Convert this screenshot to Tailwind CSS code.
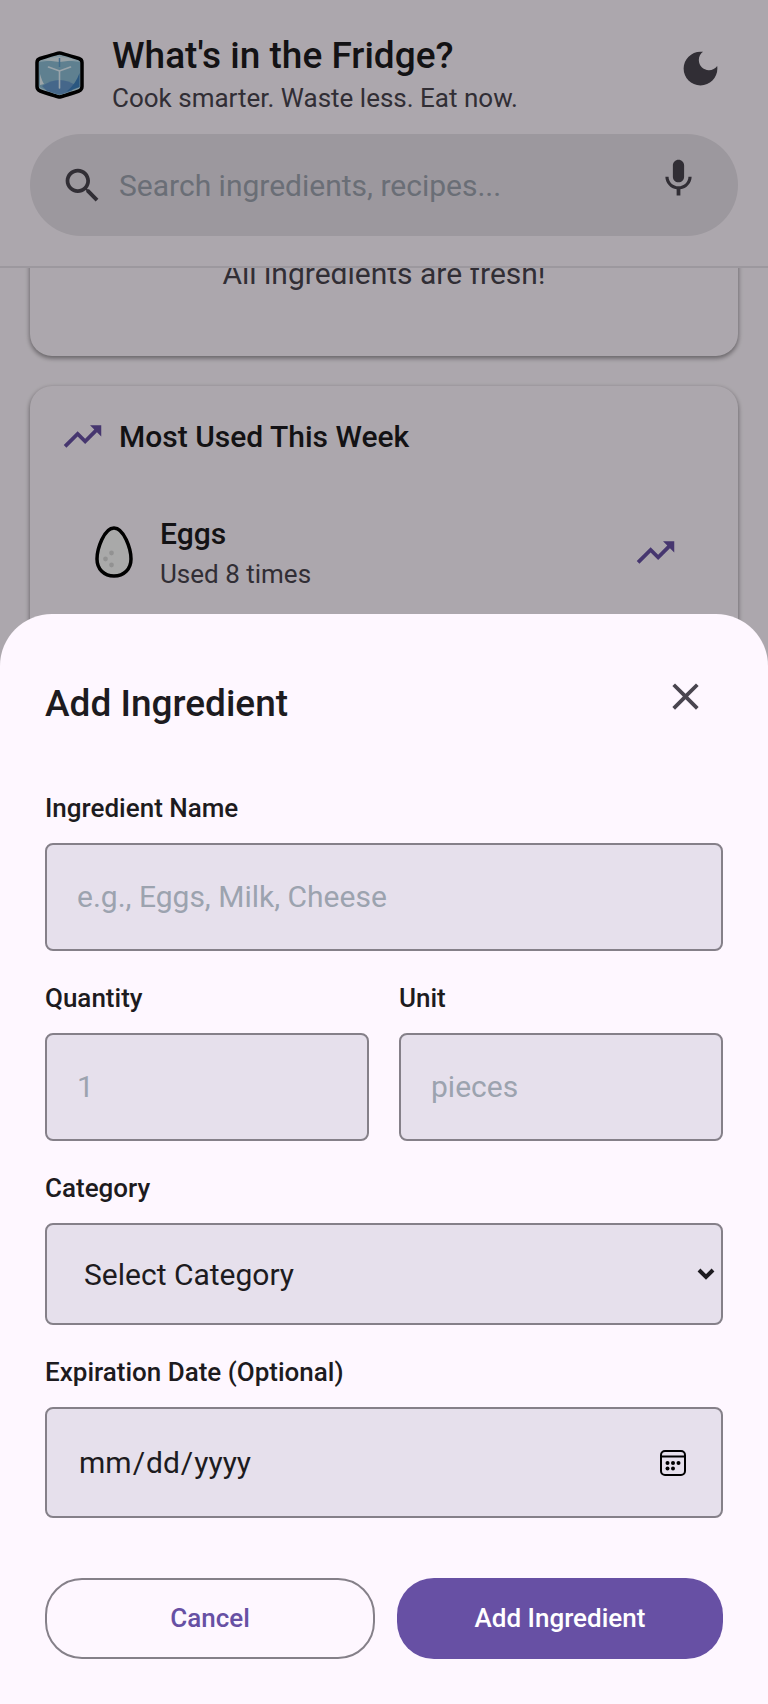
<!DOCTYPE html>
<html lang="en">
<head>
  <meta charset="UTF-8" />
  <meta name="viewport" content="width=device-width, initial-scale=1.0" />
  <title>What's in the Fridge?</title>
  <script src="https://cdn.jsdelivr.net/npm/@tailwindcss/browser@4"></script>
</head>
<body class="h-screen overflow-hidden flex flex-col bg-[#fef7ff] text-[#1d1b20] font-[Roboto,sans-serif] text-[30px] leading-[45px]">

  <!-- Header -->
  <header class="shrink-0 px-[30px] pt-[33px] pb-[30px] border-b-2 border-[#e6e0e9]">
    <div class="flex items-center justify-between h-[86px] mb-[15px]">
      <div class="flex items-center gap-[22px]">
        <svg class="size-[60px] shrink-0" viewBox="0 0 60 60" aria-hidden="true">
          <path d="M29.500 7Q31 7 49 12.500Q52 13.500 52 16.500V40.500Q52 43.500 49 45Q31 51 29.500 51Q28 51 10 45Q7 43.500 7 40.500V16.500Q7 13.500 10 12.500Q28 7 29.500 7Z" fill="#bfdfee" stroke="#000" stroke-width="3.500" stroke-linejoin="round" />
          <path d="M9 16L29.500 13.500L50 16V41Q31 49 29.500 49Q28 49 9 41Z" fill="#8cbdd4" />
          <path d="M12 40Q29.500 28 47 40L41 45Q31 48.500 29.500 48.500Q28 48.500 17 45Z" fill="#6699cc" />
          <path d="M49.500 27V41L36 46Q46 38 49.500 27Z" fill="#3f80bd" />
          <path d="M10 28Q12 35 14 38L10 39Z" fill="#e8f4fa" />
          <path d="M13 14Q29.500 8 46 14L29.500 16Z" fill="#e2f0f6" />
          <path d="M29.500 12V21" stroke="#5f9dcc" stroke-width="1.500" />
          <path d="M18.500 21L29.500 25L40.500 21M29.500 25V42" fill="none" stroke="#e4f2fb" stroke-width="1.600" stroke-linecap="round" />
        </svg>
        <div>
          <h1 class="text-[37px] leading-[45px] font-medium">What's in the Fridge?</h1>
          <p class="text-[26px] leading-[41px] text-[#49454f]">Cook smarter. Waste less. Eat now.</p>
        </div>
      </div>
      <button type="button" aria-label="Dark mode" class="px-[15px] pt-[15px] pb-[30px] text-[#49454f]">
        <svg class="size-[45px]" viewBox="0 0 24 24" fill="currentColor"><path d="M12 3c-4.970 0-9 4.030-9 9s4.030 9 9 9 9-4.030 9-9c0-.460-.040-.920-.100-1.360-.980 1.370-2.580 2.260-4.400 2.260-2.980 0-5.400-2.420-5.400-5.400 0-1.810.890-3.420 2.260-4.400-.440-.060-.900-.100-1.360-.100z" /></svg>
      </button>
    </div>

    <div class="flex items-center h-[102px] rounded-full bg-[#e6e0e9] pl-[30px] pr-[22px] text-[#49454f]">
      <svg class="size-[45px] shrink-0" viewBox="0 0 24 24" fill="currentColor" aria-hidden="true"><path d="M15.500 14h-.790l-.280-.270C15.410 12.590 16 11.110 16 9.500 16 5.910 13.090 3 9.500 3S3 5.910 3 9.500 5.910 16 9.500 16c1.610 0 3.090-.590 4.230-1.570l.270.280v.790l5 4.990L20.490 19l-4.990-5zm-6 0C7.010 14 5 11.990 5 9.500S7.010 5 9.500 5 14 7.010 14 9.500 11.990 14 9.500 14z" /></svg>
      <input type="search" aria-label="Search" placeholder="Search ingredients, recipes..." class="flex-1 min-w-0 ml-[14px] bg-transparent text-[#1d1b20] placeholder:text-[#9ca3af] outline-none" />
      <button type="button" aria-label="Voice search" class="px-[15px] pt-[15px] pb-[28px]">
        <svg class="size-[45px]" viewBox="0 0 24 24" fill="currentColor"><path d="M12 14c1.660 0 2.990-1.340 2.990-3L15 5c0-1.660-1.340-3-3-3S9 3.340 9 5v6c0 1.660 1.340 3 3 3zm5.300-3c0 3-2.540 5.100-5.300 5.100S6.700 14 6.700 11H5c0 3.410 2.720 6.230 6 6.720V21h2v-3.280c3.280-.480 6-3.300 6-6.720h-1.700z" /></svg>
      </button>
    </div>
  </header>

  <!-- Cards, scrolled under the header -->
  <main class="flex-1 min-h-0 overflow-hidden px-[30px]">
    <div class="-mt-[77px] flex flex-col gap-[30px]">
      <section class="rounded-[22px] p-[60px] bg-[#fef7ff] text-center text-[#49454f] shadow-[0_2px_4px_rgba(0,0,0,0.3),0_2px_5px_1px_rgba(0,0,0,0.15)]">
        <p>All ingredients are fresh!</p>
      </section>

      <section class="rounded-[22px] px-[30px] pt-[28px] pb-[120px] bg-[#fef7ff] shadow-[0_2px_4px_rgba(0,0,0,0.3),0_2px_5px_1px_rgba(0,0,0,0.15)]">
        <h2 class="flex items-center gap-[14px] mb-[22px] font-medium">
          <svg class="size-[45px] text-[#6750a4]" viewBox="0 0 24 24" fill="currentColor" aria-hidden="true"><path d="M16 6l2.290 2.290-4.880 4.880-4-4L2 16.590 3.410 18l6-6 4 4 6.300-6.290L22 12V6z" /></svg>
          Most Used This Week
        </h2>
        <div class="flex items-center gap-[22px] p-[30px]">
          <svg class="w-[48px] h-[60px]" viewBox="0 0 48 60" aria-hidden="true">
            <path d="M24 6C34 6 41 27 41 37C41 47 34 54 24 54S7 47 7 37C7 27 14 6 24 6Z" fill="#fafafa" stroke="#000" stroke-width="3.500" />
            <g fill="#d8d8d8"><circle cx="21.500" cy="31" r="2.400" /><circle cx="15.500" cy="37" r="2.400" /><circle cx="21.500" cy="43" r="2.400" /></g>
          </svg>
          <div class="flex-1">
            <p class="font-medium">Eggs</p>
            <p class="text-[26px] leading-[37px] text-[#49454f]">Used 8 times</p>
          </div>
          <svg class="size-[45px] text-[#6750a4]" viewBox="0 0 24 24" fill="currentColor" aria-hidden="true"><path d="M16 6l2.290 2.290-4.880 4.880-4-4L2 16.590 3.410 18l6-6 4 4 6.300-6.290L22 12V6z" /></svg>
        </div>
      </section>
    </div>
  </main>

  <!-- Scrim + bottom sheet -->
  <div class="fixed inset-0 flex flex-col justify-end bg-black/32">
    <div role="dialog" aria-labelledby="sheetTitle" class="rounded-t-[52px] bg-[#fef7ff] p-[45px]">
      <div class="flex items-center justify-between mb-[42px]">
        <h2 id="sheetTitle" class="text-[37px] leading-[52px] font-medium">Add Ingredient</h2>
        <button type="button" aria-label="Close" class="px-[15px] pt-[15px] pb-[29px] text-[#49454f]">
          <svg class="size-[45px]" viewBox="0 0 24 24" fill="currentColor"><path d="M19 6.410L17.590 5 12 10.590 6.410 5 5 6.410 10.590 12 5 17.590 6.410 19 12 13.410 17.590 19 19 17.590 13.410 12z" /></svg>
        </button>
      </div>

      <form class="flex flex-col gap-[29px]">
        <div class="flex flex-col gap-[16px]">
          <label for="name" class="text-[26px] leading-[37px] font-medium">Ingredient Name</label>
          <input id="name" type="text" placeholder="e.g., Eggs, Milk, Cheese" class="w-full h-[108px] px-[30px] pb-[2px] rounded-lg border-2 border-[#858089] bg-[#e6e0ec] placeholder:text-[#9ca3af]" />
        </div>

        <div class="grid grid-cols-2 gap-[30px]">
          <div class="flex flex-col gap-[16px]">
            <label for="quantity" class="text-[26px] leading-[37px] font-medium">Quantity</label>
            <input id="quantity" type="number" placeholder="1" class="w-full h-[108px] px-[30px] pb-[2px] rounded-lg border-2 border-[#858089] bg-[#e6e0ec] placeholder:text-[#9ca3af]" />
          </div>
          <div class="flex flex-col gap-[16px]">
            <label for="unit" class="text-[26px] leading-[37px] font-medium">Unit</label>
            <input id="unit" type="text" placeholder="pieces" class="w-full h-[108px] px-[30px] pb-[2px] rounded-lg border-2 border-[#858089] bg-[#e6e0ec] placeholder:text-[#9ca3af]" />
          </div>
        </div>

        <div class="flex flex-col gap-[16px]">
          <label for="category" class="text-[26px] leading-[37px] font-medium">Category</label>
          <div class="relative">
            <select id="category" class="block appearance-none w-full h-[102px] px-[37px] rounded-lg border-2 border-[#858089] bg-[#e6e0ec]">
              <option>Select Category</option>
            </select>
            <svg class="absolute right-2 top-[44px] w-[18px] h-[14px] pointer-events-none" viewBox="0 0 18 14" fill="none" stroke="currentColor" stroke-width="4" aria-hidden="true"><path d="M2 3L9 10L16 3" /></svg>
          </div>
        </div>

        <div class="flex flex-col gap-[16px]">
          <label for="expiry" class="text-[26px] leading-[37px] font-medium">Expiration Date (Optional)</label>
          <div class="relative">
            <input id="expiry" type="date" class="block w-full h-[111px] px-[31px] rounded-lg border-2 border-[#858089] bg-[#e6e0ec] [&::-webkit-calendar-picker-indicator]:opacity-0" />
            <svg class="absolute right-[36px] top-[42px] size-[28px] pointer-events-none" viewBox="0 0 28 28" fill="none" stroke="#000" stroke-width="2" aria-hidden="true">
              <rect x="2" y="2" width="24" height="24" rx="4" />
              <path d="M2 7.500H26" />
              <g fill="#000" stroke="none"><circle cx="8.500" cy="14" r="2" /><circle cx="14" cy="14" r="2" /><circle cx="19.500" cy="14" r="2" /><circle cx="8.500" cy="19.500" r="2" /><circle cx="14" cy="19.500" r="2" /></g>
            </svg>
          </div>
        </div>

        <div class="flex gap-[22px] mt-[31px] text-[26px] leading-[37px] font-medium">
          <button type="button" class="flex-1 h-[81px] px-[45px] rounded-[37px] border-2 border-[#858089] text-[#6750a4]">Cancel</button>
          <button type="submit" class="flex-1 h-[81px] px-[45px] rounded-[37px] bg-[#6750a4] text-white">Add Ingredient</button>
        </div>
      </form>
    </div>
  </div>

</body>
</html>
